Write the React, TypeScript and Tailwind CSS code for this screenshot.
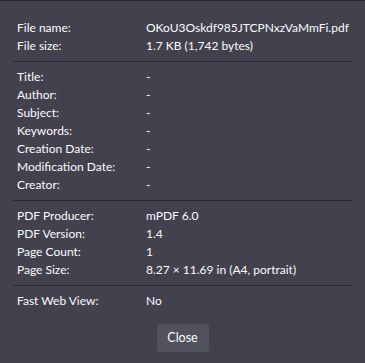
import React from "react"

type Row = [string, string]

const sections: Row[][] = [
    [
        ["File name:", "OKoU3Oskdf985JTCPNxzVaMmFi.pdf"],
        ["File size:", "1.7 KB (1,742 bytes)"],
    ],
    [
        ["Title:", "-"],
        ["Author:", "-"],
        ["Subject:", "-"],
        ["Keywords:", "-"],
        ["Creation Date:", "-"],
        ["Modification Date:", "-"],
        ["Creator:", "-"],
    ],
    [
        ["PDF Producer:", "mPDF 6.0"],
        ["PDF Version:", "1.4"],
        ["Page Count:", "1"],
        ["Page Size:", "8.27 × 11.69 in (A4, portrait)"],
    ],
    [["Fast Web View:", "No"]],
]

export default function App() {
    return (
        <div
            className="w-[365px] h-[363px] bg-[#42414d] border-t border-[#2b2a33] text-[#fbfbfe] text-[12px] leading-[18px] px-[13px] pt-[18px]"
            style={{ fontFamily: "Lato, 'Noto Sans', sans-serif" }}
        >
            {sections.map((rows, i) => (
                <div key={i}>
                    {i > 0 && <div className="h-px bg-[#2b2a33] mt-[6px] mb-[6px]" />}
                    {rows.map(([label, value]) => (
                        <div key={label} className="flex h-[18px] items-center pl-[4px]">
                            <span className="w-[129px] shrink-0">{label}</span>
                            <span className="whitespace-nowrap">{value}</span>
                        </div>
                    ))}
                </div>
            ))}
            <div className="flex justify-center mt-[14px]">
                <button className="w-[52px] h-[28px] rounded-[3px] bg-[#52525e] text-[#fbfbfe] text-[12.5px]">
                    Close
                </button>
            </div>
        </div>
    )
}
